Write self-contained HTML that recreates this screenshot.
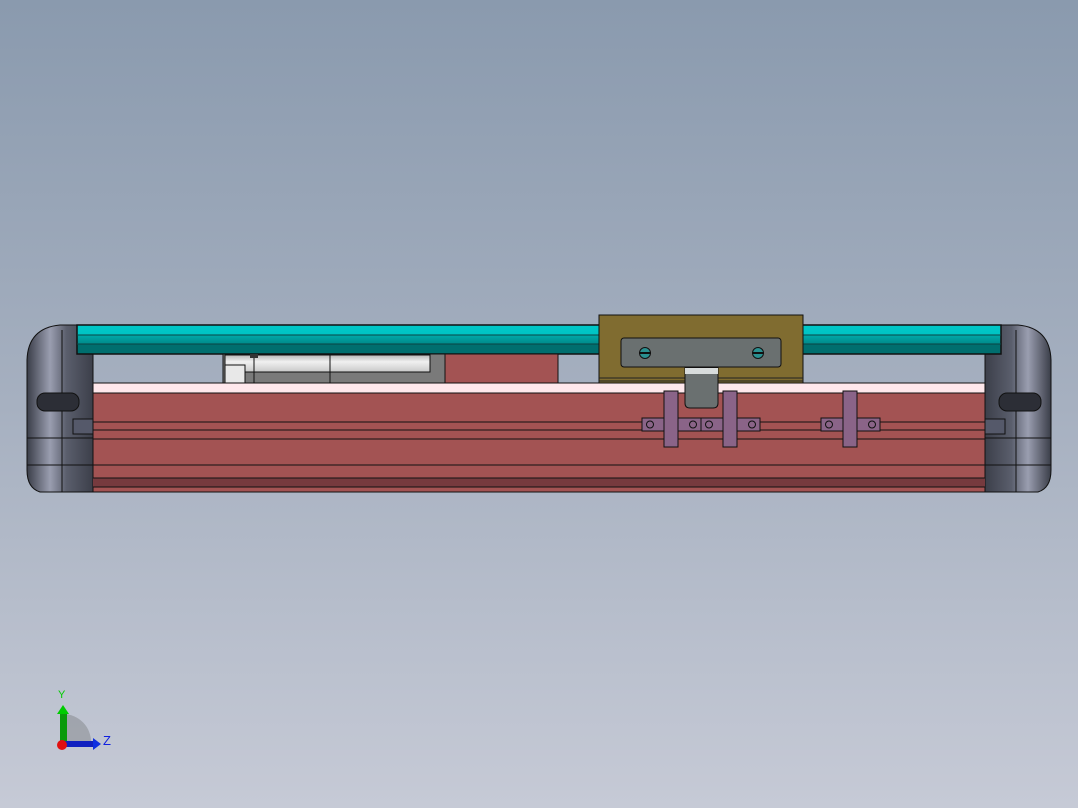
<!DOCTYPE html>
<html><head><style>
body{margin:0;width:1078px;height:808px;overflow:hidden;background:linear-gradient(#8a9aae,#a6b0c0 50%,#c6cad6);position:relative;font-family:"Liberation Sans",sans-serif}
</style></head><body>
<svg width="1078" height="808" style="position:absolute;left:0;top:0">
<defs>
<linearGradient id="cap" x1="0" x2="1"><stop offset="0" stop-color="#3a3d48"/><stop offset="0.35" stop-color="#9a9eb0"/><stop offset="0.6" stop-color="#5a5e6c"/><stop offset="1" stop-color="#3c3f4a"/></linearGradient>
<linearGradient id="capR" x1="1" x2="0"><stop offset="0" stop-color="#3a3d48"/><stop offset="0.35" stop-color="#9a9eb0"/><stop offset="0.6" stop-color="#5a5e6c"/><stop offset="1" stop-color="#3c3f4a"/></linearGradient>
<linearGradient id="teal" x1="0" y1="0" x2="0" y2="1"><stop offset="0" stop-color="#00c8c8"/><stop offset="0.33" stop-color="#00c4c4"/><stop offset="0.36" stop-color="#00a8a8"/><stop offset="0.65" stop-color="#008a8a"/><stop offset="0.68" stop-color="#006e6e"/><stop offset="1" stop-color="#006e6e"/></linearGradient>
<linearGradient id="cyl" x1="0" y1="0" x2="0" y2="1"><stop offset="0" stop-color="#b8b8b8"/><stop offset="0.4" stop-color="#f0f0f0"/><stop offset="1" stop-color="#c8c8c8"/></linearGradient>
</defs>
<path d="M27 360 Q28 328 60 325 L93 325 L93 492 L40 492 Q27 488 27 470 Z" fill="url(#cap)" stroke="#111" stroke-width="1"/>
<path d="M27 438 L93 438 M27 465 L93 465 M62 330 L62 492" stroke="#111" fill="none"/>
<rect x="37" y="393" width="42" height="18" rx="8" fill="#2c2e36" stroke="#111"/>
<rect x="73" y="419" width="20" height="15" fill="#55596a" stroke="#111"/>
<path d="M1051 360 Q1050 328 1018 325 L985 325 L985 492 L1038 492 Q1051 488 1051 470 Z" fill="url(#capR)" stroke="#111" stroke-width="1"/>
<path d="M985 438 L1051 438 M985 465 L1051 465 M1016 330 L1016 492" stroke="#111" fill="none"/>
<rect x="999" y="393" width="42" height="18" rx="8" fill="#2c2e36" stroke="#111"/>
<rect x="985" y="419" width="20" height="15" fill="#55596a" stroke="#111"/>
<rect x="77" y="325" width="924" height="29" fill="url(#teal)" stroke="#111" stroke-width="1.5"/>
<path d="M77 335H1001M77 344H1001" stroke="#0a4444" stroke-width="1"/>
<rect x="223" y="354" width="222" height="29" fill="#7a7a7a" stroke="#111"/>
<rect x="225" y="355" width="205" height="17" fill="url(#cyl)" stroke="#111"/>
<rect x="225" y="365" width="20" height="18" fill="#e8e8e8" stroke="#111"/>
<line x1="254" y1="355" x2="254" y2="383" stroke="#111"/><line x1="330" y1="355" x2="330" y2="383" stroke="#111"/>
<rect x="250" y="354" width="8" height="4" fill="#333"/>
<rect x="445" y="354" width="113" height="29" fill="#a35353" stroke="#111"/>
<rect x="93" y="383" width="892" height="10" fill="#ffe8ec" stroke="#111"/>
<rect x="93" y="393" width="892" height="99" fill="#a35353" stroke="#111"/>
<rect x="93" y="478" width="892" height="9" fill="#763a3e"/>
<path d="M93 422H985M93 430H985M93 439H985M93 465H985M93 478H985M93 487H985" stroke="#111"/>
<rect x="599" y="315" width="204" height="68" fill="#806c30" stroke="#111"/>
<path d="M599 378H803M599 381H803" stroke="#222"/>
<rect x="621" y="338" width="160" height="29" rx="3" fill="#6a7070" stroke="#111"/>
<circle cx="645" cy="353" r="5.5" fill="#2a9090" stroke="#111"/><line x1="639" y1="353" x2="651" y2="353" stroke="#111" stroke-width="2"/>
<circle cx="758" cy="353" r="5.5" fill="#2a9090" stroke="#111"/><line x1="752" y1="353" x2="764" y2="353" stroke="#111" stroke-width="2"/>
<path d="M685 368H718V403Q718 408 713 408H690Q685 408 685 403Z" fill="#6a7070" stroke="#111"/>
<rect x="685" y="368" width="33" height="6" fill="#d8dcdc"/>
<g fill="#8a6488" stroke="#111">
<rect x="642" y="418" width="59" height="13"/><rect x="701" y="418" width="59" height="13"/><rect x="821" y="418" width="59" height="13"/>
<rect x="664" y="391" width="14" height="56"/><rect x="723" y="391" width="14" height="56"/><rect x="843" y="391" width="14" height="56"/>
</g>
<g fill="none" stroke="#111"><circle cx="650" cy="424.5" r="3.5"/><circle cx="693" cy="424.5" r="3.5"/><circle cx="709" cy="424.5" r="3.5"/><circle cx="752" cy="424.5" r="3.5"/><circle cx="829" cy="424.5" r="3.5"/><circle cx="872" cy="424.5" r="3.5"/></g>
<path d="M63 743 L63 714 A28 28 0 0 1 91 743 Z" fill="#999ca4" opacity="0.8"/>
<rect x="60" y="712" width="7" height="31" fill="#0a9a0a"/><path d="M57 714 L63 705 L69 714Z" fill="#0c0"/>
<rect x="63" y="741" width="30" height="6" fill="#1020c0"/><path d="M93 738 L101 744 L93 750Z" fill="#1030e0"/>
<circle cx="62" cy="745" r="5" fill="#e01010"/>
<text x="58" y="698" font-size="11" fill="#0c0">Y</text>
<text x="103" y="745" font-size="13" fill="#1020e0">Z</text>
</svg>
</body></html>
